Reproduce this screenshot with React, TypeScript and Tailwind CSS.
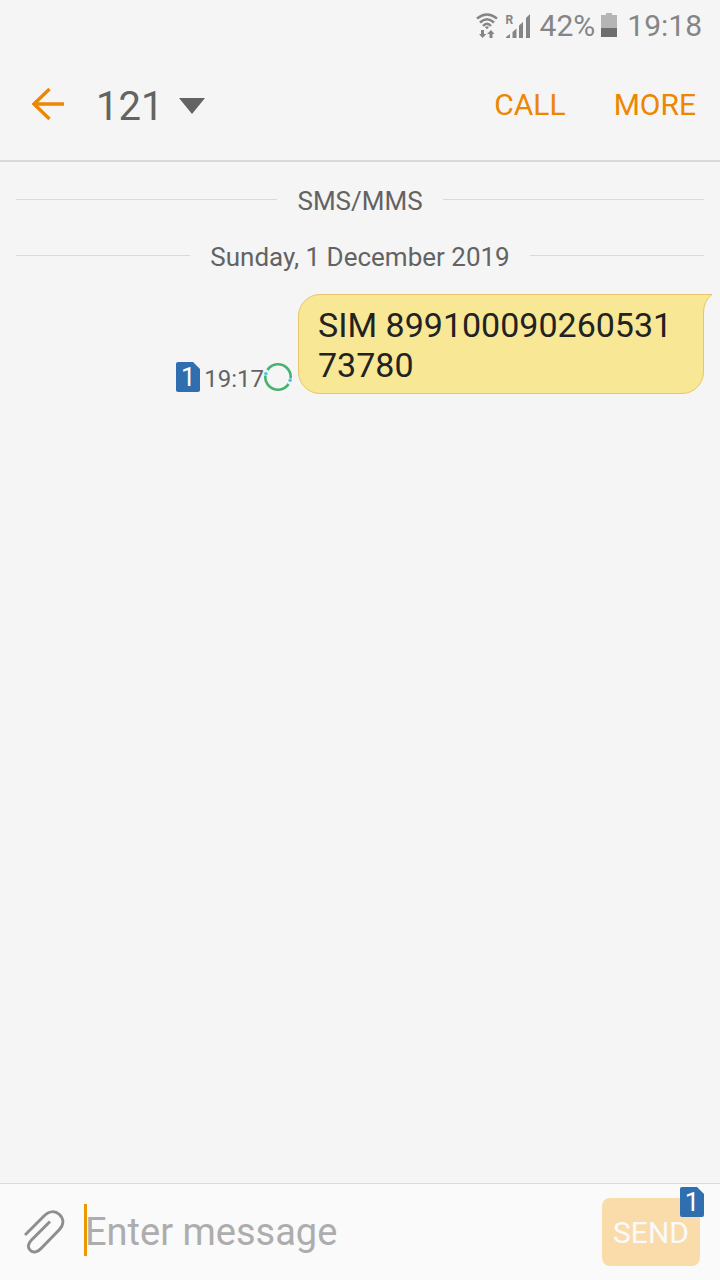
import { useState } from "react";

function SimBadge() {
  return (
    <span className="relative inline-flex h-[30px] w-6 shrink-0 items-center justify-center text-[26px] leading-[30px] text-white">
      <svg viewBox="0 0 24 30" className="absolute inset-0 h-full w-full" aria-hidden="true">
        <path d="M2 0H17L24 7V28Q24 30 22 30H2Q0 30 0 28V2Q0 0 2 0Z" fill="#306faf" />
      </svg>
      <span className="relative">1</span>
    </span>
  );
}

function Separator({ children }: { children: string }) {
  return (
    <div className="flex h-14 items-center gap-5 px-4 text-[26px] leading-8 text-[#636363]">
      <span className="h-px flex-1 bg-[#d9d9d9]" />
      <span className="pt-1">{children}</span>
      <span className="h-px flex-1 bg-[#d9d9d9]" />
    </div>
  );
}

function StatusBar() {
  return (
    <div className="flex h-[50px] items-center justify-end pr-[18px] pt-[2px] text-[30px] leading-9 text-[#858585]">
      <svg width="22" height="26" viewBox="0 0 22 26" fill="none" stroke="#858585" className="mr-2" aria-hidden="true">
        <path d="M1 5.500Q11 -2.500 21 5.500" strokeWidth="2.6" />
        <path d="M4 9.500Q11 3 18 9.500" strokeWidth="2.6" />
        <path d="M7 13Q11 8.500 15 13" strokeWidth="2.4" />
        <path d="M9 14Q11 12.700 13 14L11 16.300Z" fill="#858585" stroke="none" />
        <path d="M5 17H8V21H10.500L6.500 25L3 21H5ZM13.500 25V21H11L15 17L18.500 21H16.500V25Z" fill="#858585" stroke="none" />
      </svg>
      <span className="relative mr-[10px] block h-6 w-6">
        <svg viewBox="0 0 24 24" className="h-full w-full" fill="#858585" aria-hidden="true">
          <path d="M0 24V23L4 20V24ZM6.5 24V18L10.5 14.5V24ZM13 24V11.5L17 8V24ZM20 24V4L24 0V24Z" />
        </svg>
        <span className="absolute left-0 top-0 text-[12px] font-bold leading-3">R</span>
      </span>
      <span>42%</span>
      <svg width="16" height="24" viewBox="0 0 16 24" className="mb-[2px] ml-[6px] mr-[10px]" aria-hidden="true">
        <path d="M0 2H5V0H11V2H16V15H0Z" fill="#b5b5b5" />
        <path d="M0 15H16V24H0Z" fill="#6e6e6e" />
      </svg>
      <span>19:18</span>
    </div>
  );
}

function Header() {
  return (
    <header className="flex h-28 items-center border-b-2 border-[#d9d9d9] pb-[2px] pl-8 pr-6">
      <button type="button" aria-label="Back" className="mr-8">
        <svg width="32" height="32" viewBox="0 0 32 32" fill="none" stroke="#ed8600" className="block" aria-hidden="true">
          <path d="M17.5 1L2 16L17.5 31M2 16H32" strokeWidth="3.4" />
        </svg>
      </button>
      <button type="button" className="flex items-center gap-4 pt-1 text-[40px] leading-[48px] text-[#636363]">
        <span className="pt-[2px]">121</span>
        <svg width="26" height="16" viewBox="0 0 26 16" aria-hidden="true">
          <path d="M0 0H26L13 16Z" fill="#636363" />
        </svg>
      </button>
      <nav className="ml-auto flex gap-12 pt-[2px] text-[30px] leading-9 text-[#ed8600]">
        <button type="button">CALL</button>
        <button type="button">MORE</button>
      </nav>
    </header>
  );
}

function SentMessage() {
  return (
    <div className="mt-[11px] flex items-end justify-end pr-4">
      <div className="mb-px flex items-center">
        <SimBadge />
        <time className="ml-1 pt-1 text-2xl leading-7 text-[#636363]">19:17</time>
        <svg width="28" height="28" viewBox="0 0 28 28" fill="none" strokeWidth="2.6" className="mr-[6px]" aria-hidden="true">
          <circle cx="14" cy="14" r="12.7" stroke="#46b36d" />
          <path d="M1.4 12.6A12.7 12.7 0 0 1 3.4 7M26.6 15.4A12.7 12.7 0 0 1 24.6 21" stroke="#f5f5f5" strokeWidth="3.2" />
          <circle cx="1.9" cy="10.7" r="1.7" fill="#4cc4e6" />
          <circle cx="26.1" cy="17.300" r="1.7" fill="#4cc4e6" />
        </svg>
      </div>
      <div className="relative max-w-[406px] rounded-[22px] rounded-tr-none border border-[#e9c66c] bg-[#f8e795] px-[19px] pb-[8px] pt-[10px] text-[34px] leading-10 text-[#222] break-all">
        SIM 89910009026053173780
        <svg width="12" height="25" viewBox="0 0 12 25" className="absolute -right-[10px] -top-px" aria-hidden="true">
          <path d="M3 0H12V25H3Z" fill="#f5f5f5" />
          <path d="M0 0H11Q2.5 6 2.5 19V25H0Z" fill="#f8e795" />
          <path d="M0 .5H11Q2.5 7 2.5 19V25" fill="none" stroke="#e9c66c" />
        </svg>
      </div>
    </div>
  );
}

function Composer() {
  const [text, setText] = useState("");
  return (
    <form className="flex h-[97px] items-center border-t border-[#d9d9d9] bg-[#fafafa] pl-6 pr-5" onSubmit={(e) => e.preventDefault()}>
      <button type="button" aria-label="Attach" className="mr-5">
        <svg width="41" height="44" viewBox="0 0 41 44" fill="none" stroke="#8e8e8e" strokeWidth="3" className="block" aria-hidden="true">
          <path d="M1 25L20 6C25 1 31 .5 35.5 4.5C40 9 40 15 35 20L17.5 38C14 42 9.5 43.5 6.5 40.5C3.2 37.5 4 33.5 7.5 30L26 11.5" />
        </svg>
      </button>
      <div className="relative mr-4 min-w-0 flex-1">
        <input
          aria-label="Enter message"
          placeholder="Enter message"
          value={text}
          onChange={(e) => setText(e.target.value)}
          className="block h-[52px] w-full bg-transparent text-[38px] leading-[52px] text-[#222] caret-[#ec9800] outline-none placeholder:text-[#adadad]"
        />
        {text === "" && <span className="absolute -left-px -top-[2px] h-[52px] w-[3px] bg-[#ec9800]" />}
      </div>
      <button type="submit" className="relative h-[68px] w-[98px] rounded-lg bg-[#fadcab] pt-[2px] text-[30px] leading-9 text-[#fafafa]">
        SEND
        <span className="absolute -right-1 -top-[11px] flex">
          <SimBadge />
        </span>
      </button>
    </form>
  );
}

export default function App() {
  return (
    <div className="flex min-h-screen flex-col bg-[#f5f5f5] font-['Roboto',sans-serif]">
      <StatusBar />
      <Header />
      <main className="flex-1 pt-[9px]">
        <Separator>SMS/MMS</Separator>
        <Separator>Sunday, 1 December 2019</Separator>
        <SentMessage />
      </main>
      <Composer />
    </div>
  );
}
